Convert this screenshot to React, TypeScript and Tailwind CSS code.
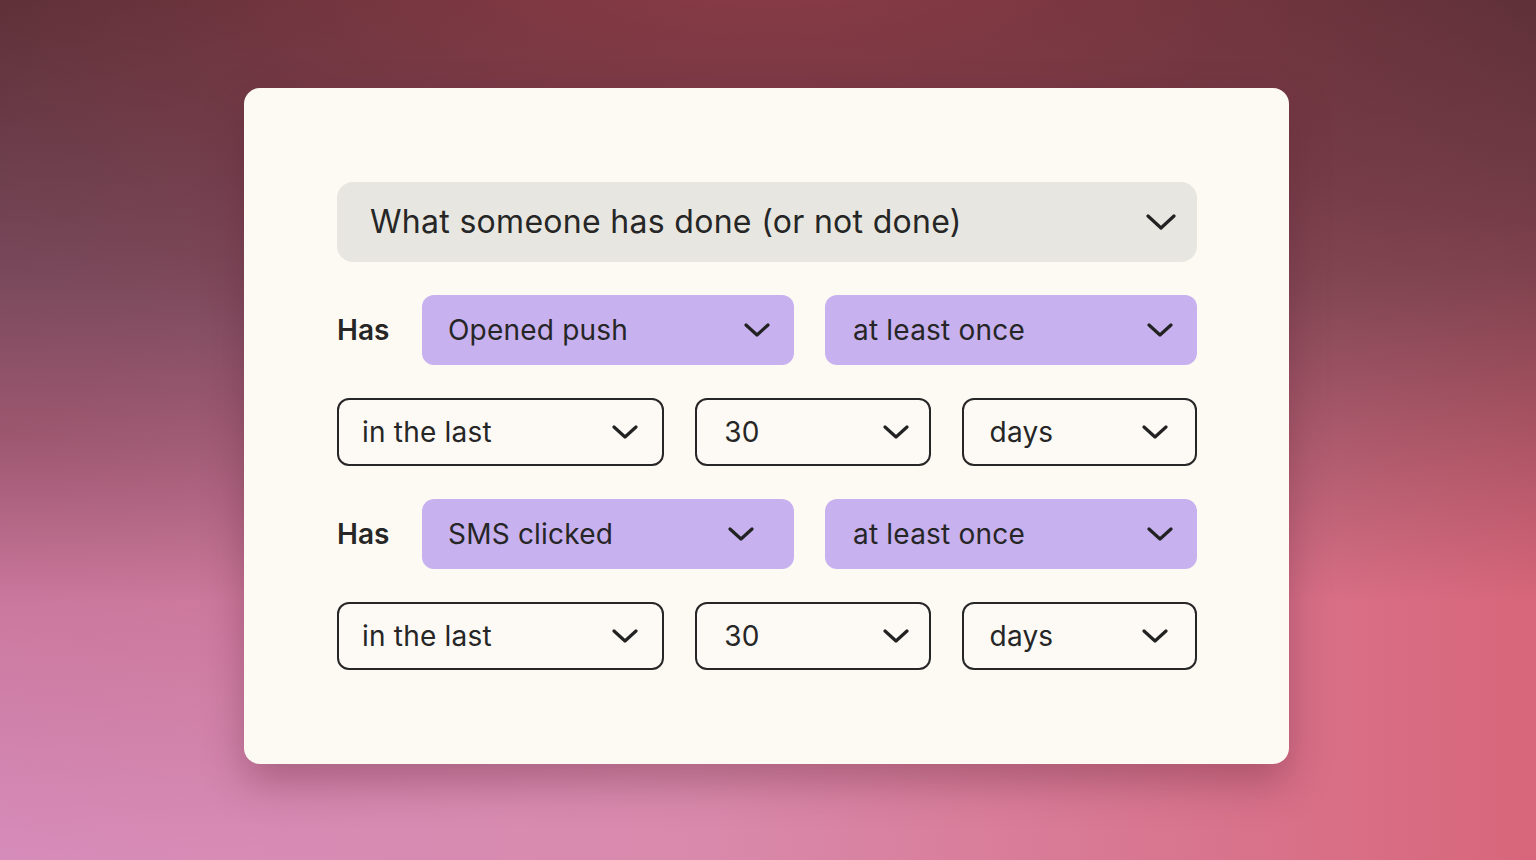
import React from "react";

function Chevron({ w = 26, h = 14 }: { w?: number; h?: number }) {
  return (
    <svg width={w} height={h} viewBox={`0 0 ${w} ${h}`} fill="none" className="shrink-0">
      <polyline
        points={`2,2 ${w / 2},${h - 2} ${w - 2},2`}
        stroke="#222222"
        strokeWidth={3.2}
        strokeLinecap="round"
        strokeLinejoin="round"
      />
    </svg>
  );
}

function PurpleSelect({ label, pl, pr }: { label: string; pl: string; pr: string }) {
  return (
    <div
      className={`flex h-[70px] w-[372px] items-center justify-between rounded-[12px] bg-[#c8b1ef] ${pl} ${pr}`}
    >
      <span className="text-[28px] leading-none tracking-[0.2px] text-[#262626]">{label}</span>
      <Chevron />
    </div>
  );
}

function OutlineSelect({ label, w, pl, pr }: { label: string; w: string; pl: string; pr: string }) {
  return (
    <div
      className={`flex h-[68px] items-center justify-between rounded-[12px] border-2 border-[#262626] bg-[#fdfaf5] ${w} ${pl} ${pr}`}
    >
      <span className="text-[28px] leading-none tracking-[0.2px] text-[#262626]">{label}</span>
      <Chevron />
    </div>
  );
}

function HasRow({ event, eventPr }: { event: string; eventPr: string }) {
  return (
    <div className="flex items-center">
      <div className="w-[85px] text-[28px] font-semibold leading-none text-[#262626]">Has</div>
      <div className="flex gap-[31px]">
        <PurpleSelect label={event} pl="pl-[26px]" pr={eventPr} />
        <PurpleSelect label="at least once" pl="pl-[28px]" pr="pr-[24px]" />
      </div>
    </div>
  );
}

function TimeRow() {
  return (
    <div className="flex gap-[31px]">
      <OutlineSelect label="in the last" w="w-[328px]" pl="pl-[23px]" pr="pr-[24px]" />
      <OutlineSelect label="30" w="w-[236px]" pl="pl-[27px]" pr="pr-[20px]" />
      <OutlineSelect label="days" w="w-[236px]" pl="pl-[26px]" pr="pr-[27px]" />
    </div>
  );
}

export default function App() {
  return (
    <div
      className="flex h-[860px] w-full justify-start pl-[244px] pt-[88px] bg-[radial-gradient(110%_70%_at_50%_-8%,rgba(150,62,74,0.95)_0%,rgba(150,62,74,0)_72%),linear-gradient(to_bottom,#442a30_0%,rgba(68,42,48,0.6)_32%,rgba(68,42,48,0)_70%),radial-gradient(70%_50%_at_0%_50%,rgba(180,80,100,0.55)_0%,rgba(180,80,100,0)_100%),linear-gradient(to_right,#d68cba_0%,#d98aac_45%,#d8667a_100%)]"
      style={{ fontFamily: "Inter, 'Noto Sans', sans-serif" }}
    >
      <div className="flex h-[676px] w-[1045px] flex-col gap-[33px] rounded-[16px] bg-[#fdfaf4] pl-[93px] pr-[92px] pt-[94px] shadow-[0_18px_40px_rgba(90,30,50,0.35)]">
        <div className="flex h-[80px] items-center justify-between rounded-[16px] bg-[#e8e6e1] pl-[33px] pr-[21px]">
          <span className="text-[32px] leading-none tracking-[0.3px] text-[#262626]">
            What someone has done (or not done)
          </span>
          <Chevron w={30} h={16} />
        </div>
        <HasRow event="Opened push" eventPr="pr-[24px]" />
        <TimeRow />
        <HasRow event="SMS clicked" eventPr="pr-[40px]" />
        <TimeRow />
      </div>
    </div>
  );
}
